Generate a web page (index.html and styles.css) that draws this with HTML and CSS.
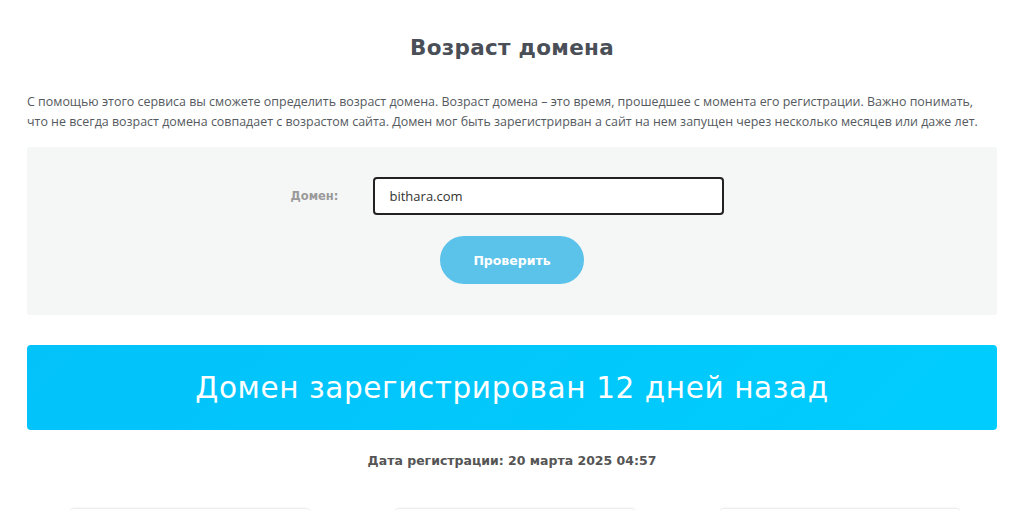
FILE: index.html
```html
<!DOCTYPE html>
<html lang="ru">
<head>
<meta charset="utf-8">
<title>Возраст домена</title>
<link rel="stylesheet" href="styles.css">
</head>
<body>
<main class="page">
  <h1 class="title">Возраст домена</h1>
  <p class="intro">С помощью этого сервиса вы сможете определить возраст домена. Возраст домена – это время, прошедшее с момента его регистрации. Важно понимать,<br>что не всегда возраст домена совпадает с возрастом сайта. Домен мог быть зарегистрирван а сайт на нем запущен через несколько месяцев или даже лет.</p>
  <form class="check-box">
    <div class="field-row">
      <label class="field-label" for="domain">Домен:</label>
      <input class="field-input" id="domain" type="text" value="bithara.com">
    </div>
    <button class="check-btn" type="button">Проверить</button>
  </form>
  <div class="result-banner">Домен зарегистрирован 12 дней назад</div>
  <p class="reg-date">Дата регистрации: 20 марта 2025 04:57</p>
  <div class="cards">
    <div class="card"></div>
    <div class="card"></div>
    <div class="card"></div>
  </div>
</main>
</body>
</html>
```

FILE: styles.css
```css
html, body {
  margin: 0;
  padding: 0;
  background: #ffffff;
}
body {
  font-family: "Open Sans", "Liberation Sans", sans-serif;
  color: #555a60;
  overflow: hidden;
}
.page {
  width: 970px;
  margin: 0 auto;
  padding-top: 34px;
}
.title {
  margin: 0;
  text-align: center;
  font-family: "DejaVu Sans", sans-serif;
  font-weight: 700;
  font-size: 21.5px;
  line-height: 28px;
  color: #4a4f57;
  letter-spacing: 0.3px;
}
.intro {
  margin: 30px 0 0;
  font-size: 12.45px;
  line-height: 20px;
  color: #555a60;
  white-space: nowrap;
}
.check-box {
  margin-top: 15px;
  background: #f5f6f6;
  height: 168px;
  border-radius: 3px;
  box-sizing: border-box;
  padding-top: 30px;
  display: flex;
  flex-direction: column;
  align-items: center;
}
.field-row {
  display: flex;
  align-items: center;
  margin-left: -10px;
}
.field-label {
  width: 82px;
  font-family: "DejaVu Sans", sans-serif;
  font-weight: 700;
  font-size: 11.5px;
  color: #9a9a9a;
}
.field-input {
  width: 351px;
  height: 38px;
  box-sizing: border-box;
  border: 2px solid #222;
  border-radius: 4px;
  padding: 0 10px 0 15px;
  font-family: "Open Sans", sans-serif;
  font-size: 13px;
  color: #333;
  background: #fff;
  outline: none;
}
.check-btn {
  margin-top: 21px;
  width: 144px;
  height: 48px;
  border: none;
  border-radius: 24px;
  background: #5bc2ea;
  color: #fff;
  font-family: "DejaVu Sans", sans-serif;
  font-weight: 700;
  font-size: 12.5px;
  cursor: pointer;
}
.result-banner {
  margin-top: 30px;
  height: 85px;
  border-radius: 4px;
  background: linear-gradient(135deg, #03c2fa 0%, #00cdfd 100%);
  color: #fff;
  display: flex;
  align-items: center;
  justify-content: center;
  font-family: "DejaVu Sans", sans-serif;
  font-size: 29.5px;
  letter-spacing: 0.6px;
  font-weight: 400;
}
.reg-date {
  margin: 23px 0 0;
  text-align: center;
  font-family: "DejaVu Sans", sans-serif;
  font-weight: 700;
  font-size: 12.5px;
  color: #555;
}
.cards {
  display: flex;
  gap: 85px;
  margin-top: 40px;
  padding-left: 43px;
}
.card {
  width: 240px;
  height: 120px;
  border-top: 1px solid #ececec;
  border-radius: 4px;
  box-shadow: 0 0 3px rgba(0,0,0,0.06);
}
```
